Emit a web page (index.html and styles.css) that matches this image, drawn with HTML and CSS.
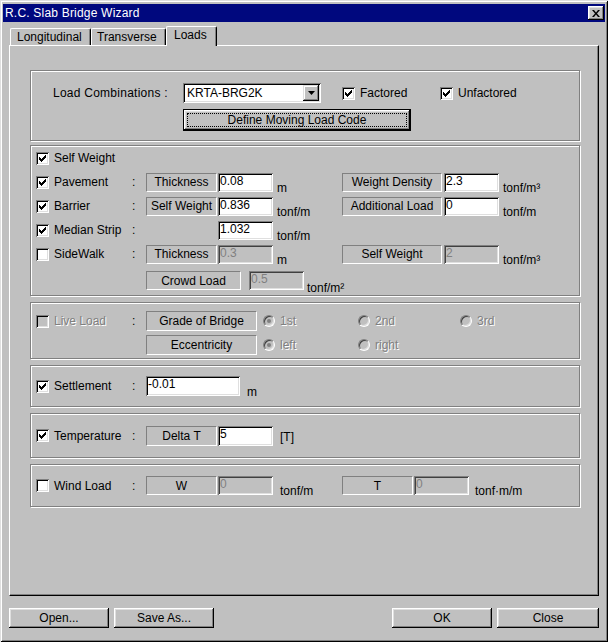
FILE: index.html
```html
<!DOCTYPE html>
<html lang="en">
<head>
<meta charset="utf-8">
<title>R.C. Slab Bridge Wizard</title>
<link rel="stylesheet" href="styles.css">
</head>
<body>
<div class="window">
  <div class="titlebar">
    <span class="title">R.C. Slab Bridge Wizard</span>
    <span class="xbtn"><svg width="8" height="7" viewBox="0 0 8 7"><path d="M0 0h2l2 2.5L6 0h2L5 3.5 8 7H6L4 4.5 2 7H0l3-3.5z"/></svg></span>
  </div>

  <div class="tabs">
    <div class="tab t1">Longitudinal</div>
    <div class="tab t2">Transverse</div>
    <div class="tab t3">Loads</div>
  </div>

  <div class="panel">
    <!-- Load combinations -->
    <div class="group g1">
      <div class="row rowA">
        <span class="lc-label">Load Combinations :</span>
        <div class="combo">
          <span class="combo-text">KRTA-BRG2K</span>
          <span class="drop"><svg width="7" height="4" viewBox="0 0 7 4"><path d="M0 0h7L3.5 4z"/></svg></span>
        </div>
        <span class="chk fact"><span class="cb"><svg class="ck" width="9" height="9" viewBox="0 0 9 9"><path d="M1 3h1v3H1zM2 4h1v3H2zM3 5h1v3H3zM4 4h1v3H4zM5 3h1v3H5zM6 2h1v3H6zM7 1h1v3H7z"/></svg></span>Factored</span>
        <span class="chk"><span class="cb"><svg class="ck" width="9" height="9" viewBox="0 0 9 9"><path d="M1 3h1v3H1zM2 4h1v3H2zM3 5h1v3H3zM4 4h1v3H4zM5 3h1v3H5zM6 2h1v3H6zM7 1h1v3H7z"/></svg></span>Unfactored</span>
      </div>
      <div class="row rowB">
        <div class="btn define"><span class="focus">Define Moving Load Code</span></div>
      </div>
    </div>

    <!-- Dead loads -->
    <div class="group g2">
      <div class="row r24">
        <span class="lead"><span class="cb"><svg class="ck" width="9" height="9" viewBox="0 0 9 9"><path d="M1 3h1v3H1zM2 4h1v3H2zM3 5h1v3H3zM4 4h1v3H4zM5 3h1v3H5zM6 2h1v3H6zM7 1h1v3H7z"/></svg></span>Self Weight</span>
      </div>
      <div class="row r24">
        <span class="lead"><span class="cb"><svg class="ck" width="9" height="9" viewBox="0 0 9 9"><path d="M1 3h1v3H1zM2 4h1v3H2zM3 5h1v3H3zM4 4h1v3H4zM5 3h1v3H5zM6 2h1v3H6zM7 1h1v3H7z"/></svg></span>Pavement</span>
        <span class="colon">:</span>
        <span class="sbox w71">Thickness</span>
        <span class="field w55">0.08</span>
        <span class="unit u-mid low">m</span>
        <span class="sbox w100">Weight Density</span>
        <span class="field w55 f2">2.3</span>
        <span class="unit u-end low">tonf/m³</span>
      </div>
      <div class="row r24">
        <span class="lead"><span class="cb"><svg class="ck" width="9" height="9" viewBox="0 0 9 9"><path d="M1 3h1v3H1zM2 4h1v3H2zM3 5h1v3H3zM4 4h1v3H4zM5 3h1v3H5zM6 2h1v3H6zM7 1h1v3H7z"/></svg></span>Barrier</span>
        <span class="colon">:</span>
        <span class="sbox w71">Self Weight</span>
        <span class="field w55">0.836</span>
        <span class="unit u-mid low">tonf/m</span>
        <span class="sbox w100">Additional Load</span>
        <span class="field w55 f2">0</span>
        <span class="unit u-end low">tonf/m</span>
      </div>
      <div class="row r24">
        <span class="lead"><span class="cb"><svg class="ck" width="9" height="9" viewBox="0 0 9 9"><path d="M1 3h1v3H1zM2 4h1v3H2zM3 5h1v3H3zM4 4h1v3H4zM5 3h1v3H5zM6 2h1v3H6zM7 1h1v3H7z"/></svg></span>Median Strip</span>
        <span class="colon">:</span>
        <span class="blank w71"></span>
        <span class="field w55">1.032</span>
        <span class="unit u-mid low">tonf/m</span>
      </div>
      <div class="row r24">
        <span class="lead"><span class="cb"></span>SideWalk</span>
        <span class="colon">:</span>
        <span class="sbox w71">Thickness</span>
        <span class="field w55 dis">0.3</span>
        <span class="unit u-mid low">m</span>
        <span class="sbox w100">Self Weight</span>
        <span class="field w55 f2 dis">2</span>
        <span class="unit u-end low">tonf/m³</span>
      </div>
      <div class="row r29">
        <span class="blank w115"></span>
        <span class="sbox w95">Crowd Load</span>
        <span class="field w55 dis f8">0.5</span>
        <span class="unit u-crowd lower">tonf/m²</span>
      </div>
    </div>

    <!-- Live load -->
    <div class="group g3">
      <div class="row r22">
        <span class="lead dtext"><span class="cb dis"></span>Live Load</span>
        <span class="colon">:</span>
        <span class="sbox w111 h20">Grade of Bridge</span>
        <span class="opt o1 dtext"><span class="radio on"></span>1st</span>
        <span class="opt o2 dtext"><span class="radio"></span>2nd</span>
        <span class="opt dtext"><span class="radio"></span>3rd</span>
      </div>
      <div class="row r22 second">
        <span class="blank w115"></span>
        <span class="sbox w111 h20">Eccentricity</span>
        <span class="opt o1 dtext"><span class="radio on"></span>left</span>
        <span class="opt o2 dtext"><span class="radio"></span>right</span>
      </div>
    </div>

    <!-- Settlement -->
    <div class="group g4">
      <div class="row">
        <span class="lead"><span class="cb"><svg class="ck" width="9" height="9" viewBox="0 0 9 9"><path d="M1 3h1v3H1zM2 4h1v3H2zM3 5h1v3H3zM4 4h1v3H4zM5 3h1v3H5zM6 2h1v3H6zM7 1h1v3H7z"/></svg></span>Settlement</span>
        <span class="colon">:</span>
        <span class="field w94 h20">-0.01</span>
        <span class="unit u7 low">m</span>
      </div>
    </div>

    <!-- Temperature -->
    <div class="group g5">
      <div class="row">
        <span class="lead"><span class="cb"><svg class="ck" width="9" height="9" viewBox="0 0 9 9"><path d="M1 3h1v3H1zM2 4h1v3H2zM3 5h1v3H3zM4 4h1v3H4zM5 3h1v3H5zM6 2h1v3H6zM7 1h1v3H7z"/></svg></span>Temperature</span>
        <span class="colon">:</span>
        <span class="sbox w71 h20">Delta T</span>
        <span class="field w55 h20">5</span>
        <span class="unit u7 slight">[T]</span>
      </div>
    </div>

    <!-- Wind -->
    <div class="group g6">
      <div class="row">
        <span class="lead"><span class="cb"></span>Wind Load</span>
        <span class="colon">:</span>
        <span class="sbox w71">W</span>
        <span class="field w55 dis">0</span>
        <span class="unit u7 uw low">tonf/m</span>
        <span class="sbox w71">T</span>
        <span class="field w55 dis">0</span>
        <span class="unit u6 low">tonf·m/m</span>
      </div>
    </div>
  </div>

  <div class="footer">
    <div class="btn fbtn">Open...</div>
    <div class="btn fbtn">Save As...</div>
    <div class="spacer"></div>
    <div class="btn fbtn">OK</div>
    <div class="btn fbtn close">Close</div>
  </div>
</div>
</body>
</html>
```

FILE: styles.css
```css
* { box-sizing: border-box; }
html, body { margin: 0; padding: 0; background: #c0c0c0; }
body {
  font-family: "Liberation Sans", Arial, sans-serif;
  font-size: 12px;
  color: #000;
}

.window {
  width: 608px;
  height: 642px;
  padding: 4px 3px 3px;
  display: flex;
  flex-direction: column;
  background: #c0c0c0;
  box-shadow: inset 1px 1px 0 #dfdfdf, inset -1px -1px 0 #000,
              inset 2px 2px 0 #fff, inset -2px -2px 0 #808080;
}

/* title bar */
.titlebar {
  flex: none;
  height: 18px;
  background: #00087e;
  color: #fff;
  display: flex;
  align-items: center;
  justify-content: space-between;
  padding-left: 2px;
}
.title { font-size: 12px; letter-spacing: 0.2px; }
.xbtn {
  width: 16px;
  height: 14px;
  margin-right: 1px;
  background: #c0c0c0;
  display: flex;
  align-items: center;
  justify-content: center;
  box-shadow: inset -1px -1px 0 #000, inset 1px 1px 0 #fff,
              inset -2px -2px 0 #808080, inset 2px 2px 0 #dfdfdf;
}
.xbtn svg { display: block; fill: #000; }

/* tabs */
.tabs {
  flex: none;
  height: 23px;
  display: flex;
  align-items: flex-end;
  padding-left: 7px;
}
.tab {
  height: 17px;
  display: flex;
  align-items: center;
  white-space: nowrap;
  background: #c0c0c0;
  border-top: 1px solid #fff;
  border-left: 1px solid #fff;
  border-right: 1px solid #000;
  box-shadow: inset -1px 0 0 #808080;
  border-radius: 2px 2px 0 0;
}
.t1 { width: 81px; padding-left: 6px; }
.t2 { width: 75px; padding-left: 5px; }
.t3 {
  width: 51px;
  height: 20px;
  padding-left: 7px;
  padding-bottom: 3px;
  margin-bottom: -1px;
  position: relative;
  z-index: 1;
}

/* tab page */
.panel {
  flex: none;
  height: 551px;
  margin: 0 6px;
  border: 1px solid;
  border-color: #fff #000 #000 #fff;
  box-shadow: inset -1px -1px 0 #808080;
  padding: 24px 0 0 20px;
}

.group {
  width: 550px;
  border: 1px solid #808080;
  box-shadow: inset 1px 1px 0 #fff, 1px 1px 0 #fff;
}
.g1 { height: 71px; padding-top: 12px; }
.g2 { height: 151px; margin-top: 4px; }
.g3 { height: 57px; margin-top: 6px; padding-top: 7px; }
.g4 { height: 42px; margin-top: 6px; display: flex; align-items: center; }
.g5 { height: 45px; margin-top: 6px; display: flex; align-items: center; }
.g6 { height: 43px; margin-top: 6px; display: flex; align-items: center; }

.row { display: flex; align-items: center; white-space: nowrap; }
.r24 { height: 24px; }
.r22 { height: 22px; }
.r29 { height: 29px; }
.second { margin-top: 2px; }

/* load combination row */
.rowA { height: 20px; }
.lc-label { width: 152px; padding-left: 22px; flex: none; letter-spacing: 0.25px; }
.combo {
  width: 138px;
  height: 20px;
  flex: none;
  background: #fff;
  padding: 2px;
  display: flex;
  align-items: center;
  justify-content: space-between;
  box-shadow: inset 1px 1px 0 #808080, inset -1px -1px 0 #fff,
              inset 2px 2px 0 #000, inset -2px -2px 0 #dfdfdf;
}
.combo-text { padding-left: 2px; }
.drop {
  width: 16px;
  height: 16px;
  background: #c0c0c0;
  display: flex;
  align-items: center;
  justify-content: center;
  box-shadow: inset -1px -1px 0 #000, inset 1px 1px 0 #dfdfdf,
              inset -2px -2px 0 #808080, inset 2px 2px 0 #fff;
}
.drop svg { display: block; fill: #000; }
.chk { display: flex; align-items: center; gap: 5px; flex: none; }
.fact { margin-left: 21px; width: 98px; }

.rowB { margin-top: 6px; padding-left: 152px; }
.btn {
  display: flex;
  align-items: center;
  justify-content: center;
  background: #c0c0c0;
  white-space: nowrap;
  box-shadow: inset -1px -1px 0 #000, inset 1px 1px 0 #fff,
              inset -2px -2px 0 #808080, inset 2px 2px 0 #dfdfdf;
}
.define {
  width: 228px;
  height: 22px;
  border: 1px solid #000;
  padding: 3px;
}
.focus {
  flex: 1;
  align-self: stretch;
  border: 1px dotted #000;
  display: flex;
  align-items: center;
  justify-content: center;
}

/* controls */
.lead {
  width: 100px;
  flex: none;
  padding-left: 5px;
  display: flex;
  align-items: center;
  gap: 5px;
}
.colon { width: 15px; flex: none; padding-left: 1px; }
.blank { flex: none; height: 1px; }

.cb {
  width: 13px;
  height: 13px;
  flex: none;
  background: #fff;
  display: flex;
  align-items: center;
  justify-content: center;
  box-shadow: inset 1px 1px 0 #808080, inset -1px -1px 0 #fff,
              inset 2px 2px 0 #000, inset -2px -2px 0 #dfdfdf;
}
.cb.dis { background: #c0c0c0; }
.ck { display: block; fill: #000; shape-rendering: crispEdges; }

.radio {
  width: 12px;
  height: 12px;
  flex: none;
  border-radius: 50%;
  background: #c0c0c0;
  border: 1px solid;
  border-color: #808080 #fff #fff #808080;
  box-shadow: inset 1px 1px 0 #404040, inset -1px -1px 0 #dfdfdf;
  display: flex;
  align-items: center;
  justify-content: center;
}
.radio.on::after {
  content: "";
  width: 4px;
  height: 4px;
  border-radius: 50%;
  background: #808080;
}

.sbox {
  height: 19px;
  flex: none;
  display: flex;
  align-items: center;
  justify-content: center;
  border: 1px solid;
  border-color: #808080 #fff #fff #808080;
}
.field {
  height: 19px;
  flex: none;
  background: #fff;
  padding: 2px 2px 0 2px;
  line-height: 13px;
  box-shadow: inset 1px 1px 0 #808080, inset -1px -1px 0 #fff,
              inset 2px 2px 0 #000, inset -2px -2px 0 #dfdfdf;
}
.field.dis {
  background: #c0c0c0;
  color: #808080;
  box-shadow: inset 1px 1px 0 #808080, inset -1px -1px 0 #fff,
              inset 2px 2px 0 #404040, inset -2px -2px 0 #dfdfdf;
}
.h20 { height: 20px; }

.w55 { width: 55px; }
.w71 { width: 71px; margin-right: 1px; }
.w94 { width: 94px; }
.w95 { width: 95px; }
.w100 { width: 100px; }
.w111 { width: 111px; }
.w115 { width: 115px; }
.f2 { margin-left: 2px; }
.f8 { margin-left: 8px; }

.unit { flex: none; }
.u-mid { width: 69px; padding-left: 4px; }
.u-end { padding-left: 4px; }
.u-crowd { padding-left: 3px; }
.u7 { padding-left: 7px; }
.uw { width: 69px; }
.u6 { padding-left: 6px; }
.low { margin-top: 11px; }
.lower { margin-top: 14px; }
.slight { margin-top: 3px; }

.opt { display: flex; align-items: center; gap: 5px; flex: none; }
.o1 { width: 101px; padding-left: 6px; }
.o2 { width: 102px; }

.dtext { color: #808080; text-shadow: 1px 1px 0 #fff; }

/* footer */
.footer {
  flex: none;
  height: 20px;
  margin-top: 12px;
  padding: 0 6px;
  display: flex;
  gap: 5px;
}
.fbtn { width: 100px; height: 20px; }
.close { width: 102px; }
.spacer { flex: 1; }
```
